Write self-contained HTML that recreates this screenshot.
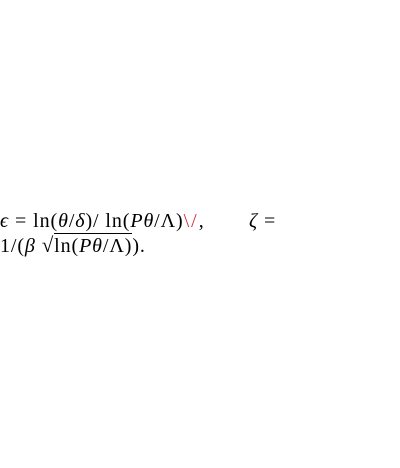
<!DOCTYPE html>
<html><head><meta charset="utf-8"><style>
html,body{margin:0;padding:0;background:#fff;width:400px;height:468px;overflow:hidden}
.l{position:absolute;left:0;font-family:"Liberation Serif",serif;font-size:20px;color:#000;white-space:nowrap;line-height:1;letter-spacing:0.9px}
i{font-style:italic}
.r{color:#c8323c}
.sq{border-top:1px solid #000;padding-top:1px}
.m{margin:0 6px}
</style></head><body>
<div class="l" style="top:211px">
<i>ϵ</i><span class="m">=</span>ln(<i>θ</i>/<i>δ</i>)/ ln(<i>Pθ</i>/Λ)<span class="r" style="letter-spacing:2px">\/</span>,</div>
<div class="l" style="top:211px;left:249px"><i>ζ</i><span class="m">=</span></div>
<div class="l" style="top:235px">1/(<i>β</i>&nbsp;<span style="font-size:21px">√</span><span class="sq">ln(<i>Pθ</i>/Λ)</span>).</div>
</body></html>
